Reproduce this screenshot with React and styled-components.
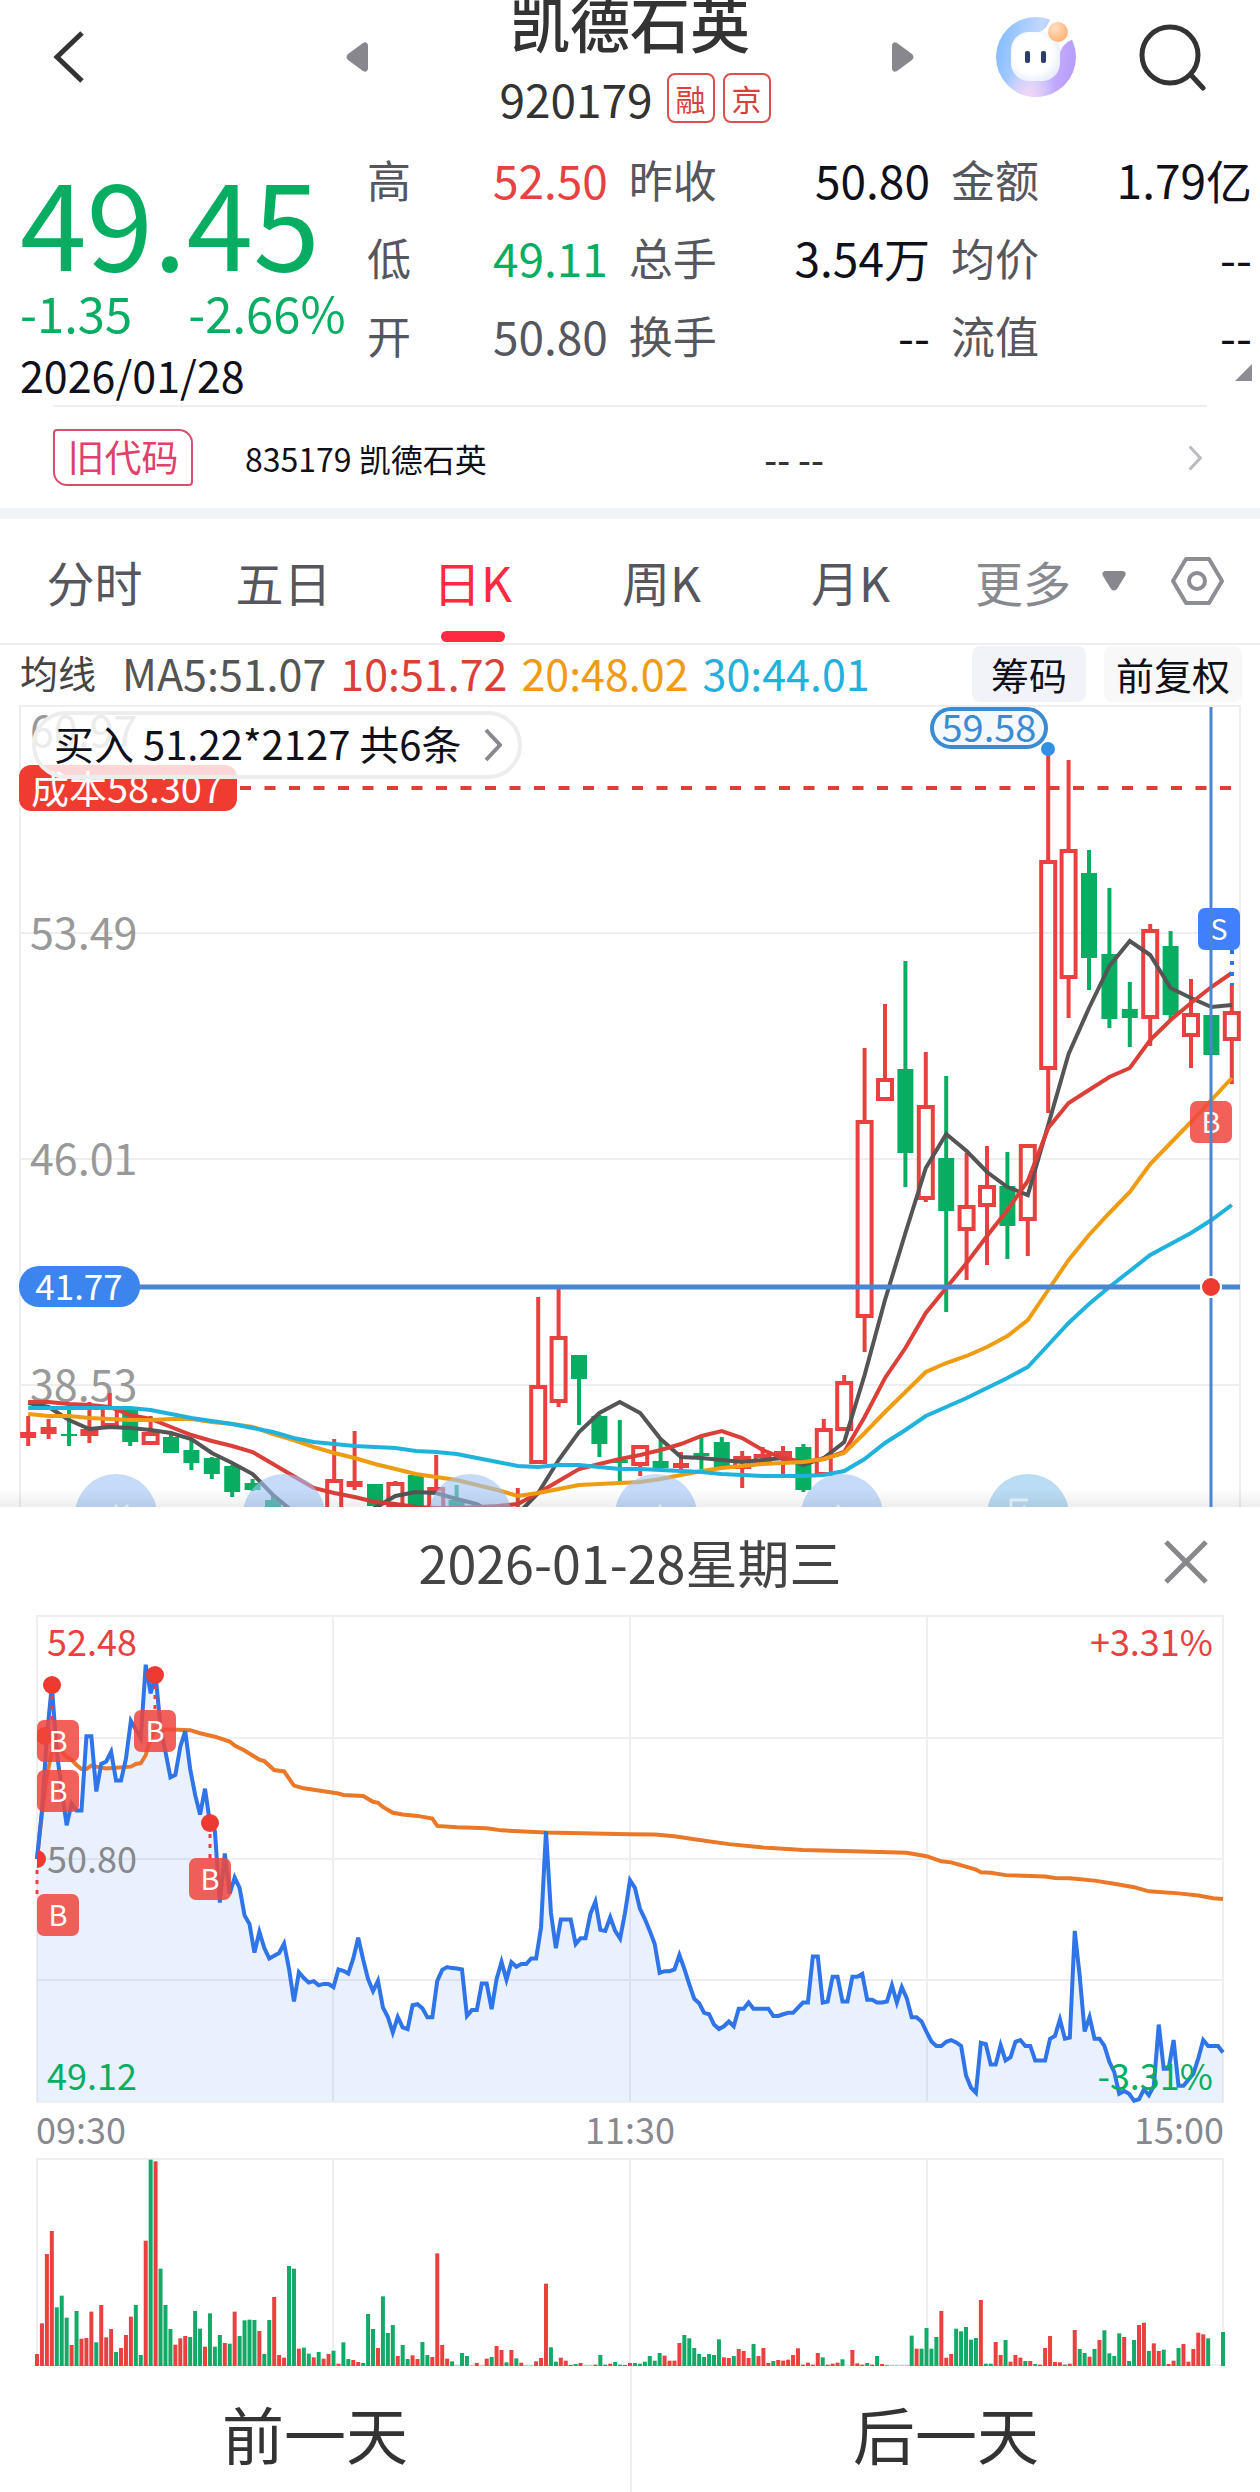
import React from 'react';
import styled, { createGlobalStyle, css } from 'styled-components';

const colors = {
    up: '#e8413f',
    down: '#07ae62',
    ink: '#10101a',
    text: '#333',
    label: '#56565e',
    muted: '#88888f',
    line: '#eeeeef',
    band: '#f2f3f8',
    accent: '#ff2942',
    blue: '#2f74e8',
    ma10: '#dc3f38',
    ma20: '#ef9c12',
    ma30: '#1fb2dd',
};

const GlobalStyle = createGlobalStyle`
    * {
        box-sizing: border-box;
    }

    body {
        margin: 0;
        background: #fff;
        color: ${colors.ink};
        font-family: 'Noto Sans CJK SC', 'Noto Sans', sans-serif;
    }

    button {
        margin: 0;
        padding: 0;
        border: 0;
        background: none;
        color: inherit;
        font: inherit;
        cursor: pointer;
    }
`;

const toneOf = tone => colors[tone] || colors.ink;

/* ---------- header ---------- */

const Header = styled.header`
    display: grid;
    grid-template-columns: 368px 1fr 368px;
    height: 140px;
`;

const HeaderSide = styled.div`
    display: flex;
    align-items: center;
    justify-content: space-between;
    height: 114px;
    padding: ${props => (props.$end ? '0 54px 0 0' : '0 0 0 53px')};
`;

const IconGroup = styled.div`
    display: flex;
    align-items: center;
    gap: 62px;
`;

const IconButton = styled.button`
    display: flex;

    svg {
        display: block;
    }
`;

const HeaderTitle = styled.div`
    display: flex;
    flex-direction: column;
    align-items: center;
    gap: 29px;
`;

const StockName = styled.h1`
    margin: 0;
    color: ${colors.text};
    font-size: 60px;
    font-weight: 500;
    line-height: 44px;
    white-space: nowrap;
`;

const CodeRow = styled.div`
    display: flex;
    align-items: center;
    gap: 8px;
    padding-left: 10px;
    color: ${colors.text};
    font-size: 46px;
    line-height: 50px;
`;

const CodeText = styled.span`
    margin-right: 6px;
`;

const Badge = styled.span`
    width: 48px;
    height: 50px;
    border: 2px solid #d9504d;
    border-radius: 8px;
    color: #d9403d;
    font-size: 30px;
    line-height: 46px;
    text-align: center;
`;

/* ---------- quote ---------- */

const Quote = styled.section`
    position: relative;
    display: grid;
    grid-template-columns: 347px 1fr;
    height: 265px;
    padding: 0 8px 0 20px;
`;

const PriceBlock = styled.div`
    padding-top: 18px;
    color: ${colors.down};
`;

const Price = styled.div`
    font-size: 120px;
    font-weight: 400;
    line-height: 122px;
`;

const Change = styled.div`
    display: flex;
    gap: 56px;
    font-size: 49px;
    line-height: 64px;
    white-space: nowrap;
`;

const QuoteDate = styled.time`
    display: block;
    color: ${colors.ink};
    font-size: 43px;
    line-height: 60px;
`;

const Stats = styled.dl`
    display: grid;
    grid-template-columns: 4fr 5fr 5fr;
    column-gap: 21px;
    align-content: start;
    margin: 0;
`;

const Stat = styled.div`
    display: flex;
    justify-content: space-between;
    line-height: 78px;
    white-space: nowrap;

    dt {
        color: ${colors.label};
        font-size: 44px;
    }

    dd {
        margin: 0;
        color: ${props => toneOf(props.$tone)};
        font-size: 46px;
    }
`;

const Corner = styled.svg`
    position: absolute;
    right: 8px;
    bottom: 24px;
`;

const OldCode = styled.a`
    display: flex;
    align-items: center;
    height: 103px;
    margin: 0 53px;
    border-top: 2px solid ${colors.line};
    color: ${colors.ink};
    font-size: 32px;
    line-height: 56px;
    text-decoration: none;

    svg {
        margin: 0 5px 0 auto;
    }
`;

const OldTag = styled.span`
    width: 140px;
    height: 57px;
    margin-right: 52px;
    border: 2px solid #d94f6d;
    border-radius: 4px 14px 4px 14px;
    color: #e0406a;
    font-size: 37px;
    line-height: 50px;
    text-align: center;
`;

const OldName = styled.span`
    flex: 0 0 45%;
`;

const Dashes = styled.span`
    color: ${colors.text};
    font-size: 36px;
    font-weight: 500;
`;

/* ---------- tabs ---------- */

const Tabs = styled.nav`
    display: grid;
    grid-template-columns: 3fr 1fr;
    height: 137px;
    border-top: 11px solid ${colors.band};
    border-bottom: 2px solid ${colors.line};
`;

const TabList = styled.div`
    display: grid;
    grid-template-columns: repeat(5, 1fr);
`;

const Tab = styled.button`
    position: relative;
    color: ${colors.label};
    font-size: 48px;
    line-height: 122px;

    ${props =>
        props.$active &&
        css`
            color: ${colors.accent};

            &::after {
                content: '';
                position: absolute;
                bottom: 1px;
                left: calc(50% - 32px);
                width: 64px;
                height: 11px;
                border-radius: 6px;
                background: ${colors.accent};
            }
        `}
`;

const TabTools = styled.div`
    display: flex;
    align-items: center;
    justify-content: space-between;
    padding: 0 36px 0 30px;
`;

const MoreButton = styled.button`
    display: flex;
    align-items: center;
    gap: 30px;
    color: ${colors.muted};
    font-size: 48px;
    line-height: 122px;
`;

const Averages = styled.div`
    display: flex;
    align-items: flex-start;
    gap: 14px;
    height: 58px;
    padding: 1px 18px 0 20px;
    font-size: 43px;
    line-height: 52px;
    white-space: nowrap;
`;

const AverageName = styled.span`
    margin-right: 12px;
    color: #444;
    font-size: 38px;
`;

const Average = styled.span`
    color: ${props => props.$color};
`;

const ChipGroup = styled.div`
    display: flex;
    gap: 18px;
    margin-left: auto;
`;

const Chip = styled.button`
    height: 56px;
    padding: 0 ${props => (props.$strong ? 19 : 12)}px;
    border-radius: 8px;
    background: ${props => (props.$strong ? colors.band : '#f8f8f9')};
    font-size: 38px;
    line-height: 50px;
`;

/* ---------- daily chart ---------- */

const ChartArea = styled.section`
    position: relative;
`;

const Chart = styled.svg`
    display: block;
    width: 100%;
    height: auto;
`;

const TradeButton = styled.button`
    position: absolute;
    top: 8px;
    left: 32px;
    display: flex;
    align-items: center;
    gap: 22px;
    height: 68px;
    padding: 0 16px 0 18px;
    border: 4px solid #ededee;
    border-radius: 34px;
    background: rgba(255, 255, 255, 0.8);
    color: ${colors.ink};
    font-size: 40px;
    line-height: 56px;
    white-space: nowrap;

    span {
        padding-bottom: 4px;
    }
`;

const STEP = 20.4;
const dayX = i => 28.2 + STEP * i;

// index, kind (r hollow, R solid red, g green), high, body top, body bottom, low
const candles = [
    [0, 'R', 1416, 1432, 1438, 1446],
    [1, 'R', 1419, 1427, 1434, 1439],
    [2, 'g', 1403, 1434, 1436, 1446],
    [3, 'r', 1402, 1430, 1435, 1443],
    [4, 'r', 1393, 1407, 1426, 1426],
    [5, 'g', 1408, 1408, 1442, 1446],
    [6, 'r', 1416, 1433, 1444, 1444],
    [7, 'g', 1433, 1437, 1453, 1453],
    [8, 'g', 1440, 1450, 1463, 1470],
    [9, 'g', 1457, 1458, 1474, 1479],
    [10, 'g', 1465, 1466, 1492, 1497],
    [11, 'g', 1479, 1483, 1490, 1491],
    [12, 'g', 1496, 1500, 1514, 1514],
    [15, 'r', 1439, 1480, 1514, 1514],
    [16, 'R', 1431, 1481, 1487, 1490],
    [17, 'g', 1484, 1484, 1506, 1514],
    [18, 'r', 1481, 1483, 1506, 1506],
    [19, 'g', 1475, 1475, 1514, 1514],
    [20, 'r', 1455, 1488, 1514, 1514],
    [21, 'g', 1485, 1500, 1507, 1507],
    [24, 'r', 1488, 1512, 1514, 1514],
    [25, 'r', 1297, 1386, 1463, 1463],
    [26, 'r', 1289, 1337, 1402, 1407],
    [27, 'g', 1355, 1355, 1379, 1425],
    [28, 'g', 1415, 1416, 1444, 1457],
    [29, 'g', 1420, 1460, 1463, 1481],
    [30, 'r', 1445, 1446, 1465, 1476],
    [31, 'g', 1440, 1461, 1468, 1470],
    [32, 'R', 1452, 1463, 1468, 1472],
    [33, 'g', 1437, 1453, 1456, 1472],
    [34, 'g', 1437, 1442, 1468, 1470],
    [35, 'r', 1451, 1457, 1468, 1488],
    [36, 'r', 1447, 1455, 1463, 1463],
    [37, 'r', 1446, 1452, 1458, 1474],
    [38, 'g', 1444, 1447, 1490, 1492],
    [39, 'r', 1419, 1429, 1475, 1476],
    [40, 'r', 1375, 1382, 1430, 1431],
    [41, 'r', 1048, 1121, 1317, 1352],
    [42, 'r', 1004, 1079, 1100, 1100],
    [43, 'g', 961, 1069, 1153, 1187],
    [44, 'r', 1052, 1106, 1199, 1202],
    [45, 'g', 1076, 1158, 1211, 1312],
    [46, 'r', 1153, 1206, 1230, 1280],
    [47, 'r', 1146, 1186, 1206, 1265],
    [48, 'g', 1152, 1186, 1226, 1259],
    [49, 'r', 1145, 1145, 1220, 1256],
    [50, 'r', 755, 861, 1069, 1113],
    [51, 'r', 760, 850, 978, 1018],
    [52, 'g', 850, 873, 958, 990],
    [53, 'g', 888, 954, 1019, 1028],
    [54, 'g', 982, 1009, 1018, 1047],
    [55, 'r', 924, 930, 1018, 1046],
    [56, 'g', 931, 946, 1015, 1020],
    [57, 'r', 979, 1014, 1036, 1068],
    [58, 'g', 1015, 1015, 1055, 1055],
    [59, 'r', 985, 1012, 1040, 1084],
];

const averages = [
    {
        color: '#555',
        values: [
            1403, 1407, 1420, 1429, 1427, 1428, 1430, 1433, 1439, 1453, 1463, 1474, 1495, 1512, 1524,
            1524, 1518, 1508, 1496, 1492, 1493, 1499, 1504, 1516, 1514, 1493, 1460, 1432, 1413, 1402,
            1413, 1439, 1457, 1458, 1460, 1462, 1460, 1458, 1465, 1458, 1442, 1375, 1300, 1233, 1168,
            1134, 1151, 1172, 1187, 1195, 1125, 1054, 1008, 966, 941, 955, 988, 998, 1007, 1005,
        ],
    },
    {
        color: colors.ma10,
        values: [
            1402, 1402, 1404, 1405, 1407, 1415, 1419, 1427, 1435, 1441, 1446, 1452, 1464, 1476, 1488,
            1493, 1497, 1502, 1504, 1507, 1508, 1508, 1507, 1506, 1504, 1493, 1481, 1469, 1464, 1459,
            1455, 1450, 1444, 1436, 1431, 1438, 1450, 1458, 1462, 1459, 1452, 1417, 1378, 1348, 1313,
            1288, 1263, 1236, 1210, 1181, 1128, 1103, 1090, 1077, 1068, 1040, 1020, 1003, 987, 973,
        ],
    },
    {
        color: colors.ma20,
        values: [
            1414, 1416, 1416, 1418, 1419, 1420, 1420, 1419, 1419, 1422, 1424, 1427, 1434, 1440, 1447,
            1453, 1458, 1464, 1469, 1474, 1477, 1480, 1485, 1490, 1496, 1493, 1489, 1485, 1484, 1483,
            1482, 1479, 1475, 1471, 1468, 1466, 1464, 1463, 1462, 1459, 1453, 1433, 1412, 1392, 1372,
            1363, 1356, 1347, 1336, 1320, 1290, 1260, 1235, 1213, 1192, 1164, 1143, 1122, 1100, 1078,
        ],
    },
    {
        color: colors.ma30,
        values: [
            1408, 1408, 1408, 1408, 1408, 1408, 1410, 1414, 1418, 1421, 1424, 1428, 1432, 1438, 1442,
            1444, 1446, 1447, 1448, 1451, 1452, 1454, 1458, 1462, 1466, 1467, 1465, 1465, 1467, 1469,
            1469, 1470, 1471, 1472, 1474, 1475, 1476, 1476, 1476, 1475, 1471, 1459, 1443, 1430, 1416,
            1407, 1398, 1388, 1378, 1367, 1345, 1323, 1304, 1287, 1271, 1255, 1244, 1233, 1220, 1205,
        ],
    },
];

const Candle = ({ row }) => {
    const [index, kind, high, top, bottom, low] = row;
    const x = dayX(index);
    const color = kind === 'g' ? colors.down : colors.up;
    const hollow = kind === 'r';
    return (
        <g stroke={color}>
            <path d={`M${x} ${high}V${top}M${x} ${bottom}V${low}`} strokeWidth="4" />
            {hollow ? (
                <rect
                    x={x - 7}
                    y={top + 1}
                    width="14"
                    height={Math.max(bottom - top - 2, 2)}
                    fill="none"
                    strokeWidth="4"
                />
            ) : (
                <rect x={x - 8} y={top} width="16" height={bottom - top} fill={color} stroke="none" />
            )}
        </g>
    );
};

const Mark = ({ x, y, letter = 'B', color = '#f0463e' }) => (
    <g>
        <rect
            x={x}
            y={y}
            width="42"
            height="42"
            rx="7"
            fill={color}
            fillOpacity={letter === 'B' ? 0.86 : 1}
        />
        <text x={x + 21} y={y + 32} fill="#fff" fontSize="29" textAnchor="middle">
            {letter}
        </text>
    </g>
);

const DayChart = () => (
    <Chart viewBox="0 703 1260 804" role="img" aria-label="日K">
        <defs>
            <linearGradient id="shade" x1="0" y1="0" x2="0" y2="1">
                <stop offset="0" stopColor="#000" stopOpacity="0" />
                <stop offset="1" stopColor="#000" stopOpacity="0.07" />
            </linearGradient>
        </defs>
        <path
            d="M20 1510V706H1240V1510M20 933H1240M20 1159H1240M20 1385H1240"
            fill="none"
            stroke={colors.line}
            strokeWidth="2"
        />
        <g fill="#999" fontSize="43">
            <text x="30" y="747">60.97</text>
            <text x="30" y="949">53.49</text>
            <text x="30" y="1175">46.01</text>
            <text x="30" y="1401">38.53</text>
        </g>
        {candles.map(row => (
            <Candle key={row[0]} row={row} />
        ))}
        <path d="M240 788H1232" stroke={colors.ma10} strokeWidth="4" strokeDasharray="11 13.5" />
        {averages.map(line => (
            <polyline
                key={line.color}
                points={line.values.map((y, i) => `${dayX(i)},${y}`).join(' ')}
                fill="none"
                stroke={line.color}
                strokeWidth="4"
            />
        ))}
        <rect x="19" y="765" width="218" height="46" rx="12" fill="#f03b31" />
        <text x="31" y="803" fill="#fff" fontSize="38">成本58.307</text>
        <rect x="932" y="709" width="114" height="38" rx="19" fill="#f4f9fe" stroke="#3a8bd2" strokeWidth="4" />
        <text x="989" y="742" fill="#3a8bd2" fontSize="38" textAnchor="middle">59.58</text>
        <circle cx="1048" cy="749" r="7" fill="#2f90e6" />
        <path d="M1232 950V985" stroke={colors.blue} strokeWidth="4" strokeDasharray="4 7" />
        <Mark x={1198} y={908} letter="S" color="#4080ff" />
        <Mark x={1190} y={1101} />
        <g fill="#9fc3f5" fillOpacity="0.6">
            {[116, 284, 470, 656, 842].map(cx => (
                <circle key={cx} cx={cx} cy="1515" r="41" />
            ))}
            <circle cx="1028" cy="1515" r="41" fill="#8cc5ee" />
        </g>
        <g fill="none" stroke="#fff" strokeOpacity="0.7" strokeWidth="3">
            <path d="M117 1505L107 1516M128 1505L118 1516M661 1505L653 1514M837 1505L845 1514M1011 1516V1500H1028M1023 1506L1031 1514" />
        </g>
        <rect x="0" y="1489" width="1260" height="18" fill="url(#shade)" />
        <g stroke="#4a86d0">
            <path d="M20 1287H1240" strokeWidth="5" />
            <path d="M1211 707V1507" strokeWidth="3" />
        </g>
        <circle cx="1211" cy="1287" r="10" fill="#ee3a30" stroke="#fff" strokeWidth="2" />
        <rect x="19" y="1266" width="121" height="41" rx="20" fill="#3c85ee" />
        <text x="79" y="1300" fill="#fff" fontSize="35" textAnchor="middle">41.77</text>
    </Chart>
);

/* ---------- intraday sheet ---------- */

const SheetHeader = styled.header`
    display: grid;
    grid-template-columns: 1fr auto 1fr;
    align-items: center;
    height: 105px;
    padding: 4px 52px 0;
    color: #444;

    button {
        justify-self: end;
    }
`;

const SheetTitle = styled.h2`
    grid-column: 2;
    margin: 0;
    font-size: 52px;
    font-weight: 400;
    line-height: 100px;
`;

const TimeAxis = styled.div`
    display: grid;
    grid-template-columns: 1fr auto 1fr;
    height: 50px;
    padding: 0 36px;
    color: ${colors.muted};
    font-size: 36px;
    line-height: 44px;

    span:last-child {
        text-align: right;
    }
`;

const Footer = styled.footer`
    display: grid;
    grid-template-columns: 1fr 1fr;
`;

const DayButton = styled.button`
    height: 126px;
    padding-top: 8px;
    color: ${colors.text};
    font-size: 62px;
    line-height: 118px;

    & + & {
        border-left: 2px solid ${colors.line};
    }
`;

const LEFT = 37;
const MINUTE = 1186 / 240;
const minuteX = m => LEFT + MINUTE * m;
const priceY = v => 1590 + v / 2.904;

// one value a minute, measured down from the top of the scale
const prices = [
    781, 640, 425, 277, 470, 580, 683, 620, 640, 640, 425, 425, 585, 505, 498, 470, 553, 553, 490, 380,
    405, 430, 217, 300, 247, 400, 470, 544, 537, 455, 410, 520, 595, 652, 577, 677, 700, 908, 765, 882,
    835, 865, 945, 970, 1053, 993, 1040, 1070, 1062, 1054, 1027, 1100, 1195, 1110, 1127, 1140, 1136, 1148, 1144, 1144,
    1153, 1102, 1106, 1114, 1070, 1010, 1073, 1130, 1165, 1135, 1212, 1240, 1285, 1240, 1270, 1275, 1206, 1203, 1215, 1241,
    1241, 1135, 1103, 1095, 1098, 1099, 1102, 1237, 1220, 1220, 1143, 1143, 1217, 1130, 1080, 1132, 1081, 1094, 1086, 1086,
    1070, 1070, 980, 700, 937, 1040, 957, 957, 957, 1028, 1011, 1011, 940, 905, 987, 990, 950, 990, 1012, 937,
    843, 865, 925, 955, 990, 1028, 1112, 1107, 1107, 1102, 1060, 1100, 1145, 1187, 1200, 1228, 1232, 1262, 1275, 1267,
    1253, 1267, 1216, 1216, 1198, 1216, 1216, 1216, 1216, 1237, 1237, 1232, 1228, 1228, 1213, 1198, 1198, 1064, 1064, 1198,
    1195, 1123, 1123, 1195, 1195, 1123, 1123, 1115, 1190, 1190, 1198, 1198, 1195, 1148, 1198, 1153, 1185, 1241, 1241, 1253,
    1283, 1311, 1324, 1324, 1312, 1307, 1314, 1324, 1410, 1445, 1460, 1315, 1319, 1378, 1378, 1322, 1366, 1357, 1312, 1307,
    1324, 1324, 1366, 1366, 1366, 1303, 1295, 1247, 1303, 1300, 990, 1120, 1282, 1240, 1303, 1303, 1324, 1370, 1400, 1463,
    1455, 1463, 1483, 1479, 1450, 1467, 1440, 1262, 1390, 1390, 1307, 1440, 1440, 1422, 1405, 1360, 1307, 1324, 1324, 1324,
    1343,
];

// minute, value
const meanPrice = [
    [0, 781], [1, 650], [2, 540], [3, 470], [4, 455], [6, 485], [7, 493], [8, 508], [9, 520], [10, 520],
    [11, 510], [12, 513], [14, 518], [16, 516], [19, 513], [20, 505], [21, 503], [22, 480], [23, 430], [24, 405],
    [27, 405], [31, 407], [33, 416], [36, 426], [39, 440], [40, 452], [42, 466], [45, 493], [46, 497], [48, 523],
    [50, 527], [52, 568], [54, 576], [61, 591], [62, 595], [66, 598], [68, 615], [69, 618], [70, 630], [72, 647],
    [74, 652], [77, 656], [80, 664], [81, 685], [85, 689], [91, 692], [94, 698], [103, 704], [120, 709], [125, 710],
    [129, 715], [133, 724], [140, 738], [147, 748], [155, 755], [165, 759], [176, 763], [180, 773], [183, 788], [185, 791],
    [190, 812], [191, 820], [193, 821], [196, 828], [204, 832], [206, 836], [209, 837], [214, 844], [218, 853], [222, 863],
    [225, 875], [231, 881], [235, 887], [238, 895], [240, 897],
];

// direction and height for each minute, in thirds of a unit
const volumes = `
r36 r128 r336 r405 g176 g211 g145 r63 g165 r82 r84 r163 g71 r183 r86 r111 g42 r54 r93 r148
g183 g33 r376 g619 r614 g292 g183 g111 r64 r83 r90 g87 g165 g112 r58 g158 g58 g93 r69 g67
r163 g90 g137 g139 g138 r105 g36 g138 r207 r33 r25 g300 g292 r52 g55 g37 r26 g42 r22 r36
g46 r7 g71 g21 r18 r12 g9 g156 g111 r54 g209 g99 g123 r30 g63 g21 r32 r21 g72 g33
r27 r338 r63 r22 g14 r1 g39 g30 r1 r9 r1 r22 g27 r60 r48 g11 r48 g23 r10 r1
r1 r14 r24 r247 g56 g13 r25 r16 r3 g6 r9 r1 r1 r4 g33 g4 r7 g12 g4 r3
r9 g9 g7 g13 g30 g16 g39 r31 r16 r16 r69 g93 g83 g54 g36 g27 g36 g33 g80 r26
r24 g30 r51 r45 r24 g66 r30 r54 r9 g15 r18 r16 r19 r33 r53 r4 r10 r4 r39 g26
r4 r7 r10 g20 r0 r48 r8 r4 g9 r4 g30 r6 r2 r1 r1 g1 g1 g91 r52 g52
g114 g52 g87 r165 r25 r36 g112 g104 g117 g79 g84 r198 g7 g7 r72 r33 g78 r13 r33 r25
g15 r15 g6 r4 r54 r90 r12 r11 g4 r7 r108 g51 g39 r28 g51 r78 g107 g38 g30 g98
r87 g15 g78 r123 r130 g45 r68 r45 g49 r6 r16 g54 r66 r13 r51 r100 r95 g83 r0 r0
g102`
    .trim()
    .split(/\s+/)
    .map(item => ({ up: item[0] === 'r', height: Number(item.slice(1)) / 3 }));

const pricePoints = prices.map((v, m) => `${minuteX(m)},${priceY(v)}`).join(' ');

const MinuteChart = () => (
    <Chart viewBox="0 1612 1260 494" role="img" aria-label="分时">
        <defs>
            <clipPath id="plot">
                <rect x="37" y="1612" width="1187" height="492" />
            </clipPath>
        </defs>
        <polygon points={`37,2101 ${pricePoints} 1223,2101`} fill="#e9f0fe" />
        <path
            d="M37 1616H1223V2102H37ZM37 1738H1223M37 1859H1223M37 1980H1223M333 1616V2102M630 1616V2102M927 1616V2102"
            fill="none"
            stroke="#182040"
            strokeOpacity="0.07"
            strokeWidth="2"
        />
        <polyline
            points={meanPrice.map(([m, v]) => `${minuteX(m)},${priceY(v)}`).join(' ')}
            fill="none"
            stroke="#ea7828"
            strokeWidth="4"
        />
        <polyline points={pricePoints} fill="none" stroke={colors.blue} strokeWidth="4" />
        <path
            d="M37 1870V1896M52 1696V1720M155 1685V1710M210 1834V1858"
            stroke="#e8413f"
            strokeWidth="3"
            strokeDasharray="4 6"
        />
        <g fill="#ee3a30" clipPath="url(#plot)">
            <circle cx="37" cy="1859" r="9" />
            <circle cx="45" cy="1736" r="9" />
            <circle cx="52" cy="1685" r="9" />
            <circle cx="155" cy="1675" r="9" />
            <circle cx="210" cy="1823" r="9" />
        </g>
        <Mark x={37} y={1720} />
        <Mark x={37} y={1770} />
        <Mark x={37} y={1894} />
        <Mark x={134} y={1710} />
        <Mark x={189} y={1858} />
        <g fontSize="36">
            <text x="47" y="1656" fill={colors.up}>52.48</text>
            <text x="47" y="1873" fill={colors.muted}>50.80</text>
            <text x="47" y="2090" fill={colors.down}>49.12</text>
            <text x="1213" y="1656" fill={colors.up} textAnchor="end">+3.31%</text>
            <text x="1213" y="2090" fill={colors.down} textAnchor="end">-3.31%</text>
        </g>
    </Chart>
);

const VolumeChart = () => (
    <Chart viewBox="0 2156 1260 210" role="img" aria-label="成交量">
        <path
            d="M37 2365V2159H1223V2365ZM333 2159V2365M630 2159V2365M927 2159V2365"
            fill="none"
            stroke={colors.line}
            strokeWidth="2"
        />
        {volumes.map((bar, m) => (
            <rect
                key={m}
                x={minuteX(m) - 2}
                y={2366 - bar.height}
                width="4"
                height={bar.height}
                fill={bar.up ? colors.up : '#12aa66'}
            />
        ))}
    </Chart>
);

/* ---------- icons ---------- */

const BackIcon = () => (
    <svg width="32" height="54" viewBox="0 0 32 54" fill="none" stroke="#333" strokeWidth="5">
        <path d="M29 3L4 27L29 51" />
    </svg>
);

const ArrowIcon = ({ left }) => (
    <svg width="22" height="32" viewBox="0 0 22 32" fill="#88878e">
        <path
            d={
                left
                    ? 'M22 4Q21 0 17 2L2 13Q-1 16 2 19L17 30Q21 32 22 28Z'
                    : 'M0 4Q1 0 5 2L20 13Q23 16 20 19L5 30Q1 32 0 28Z'
            }
        />
    </svg>
);

const MascotIcon = () => (
    <svg width="82" height="82" viewBox="0 0 82 82">
        <defs>
            <linearGradient id="ring" x1="0" y1="0.4" x2="1" y2="0.6">
                <stop offset="0" stopColor="#86bdff" />
                <stop offset="0.5" stopColor="#c3d8ff" />
                <stop offset="0.8" stopColor="#bfa8fd" />
                <stop offset="1" stopColor="#b79cfb" />
            </linearGradient>
            <radialGradient id="blush" cx="0.4" cy="0.98" r="0.35">
                <stop offset="0" stopColor="#f5d3f6" />
                <stop offset="1" stopColor="#f5d3f6" stopOpacity="0" />
            </radialGradient>
            <radialGradient id="face" cx="0.45" cy="0.45" r="0.65">
                <stop offset="0.6" stopColor="#fff" />
                <stop offset="1" stopColor="#e3e9fb" />
            </radialGradient>
            <radialGradient id="ball" cx="0.35" cy="0.3" r="0.8">
                <stop offset="0" stopColor="#ffdfc4" />
                <stop offset="1" stopColor="#ffae6c" />
            </radialGradient>
        </defs>
        <circle cx="41" cy="41" r="40" fill="url(#ring)" />
        <circle cx="41" cy="41" r="40" fill="url(#blush)" />
        <path d="M56 0Q53 14 42 17L64 40Q66 28 78 23L82 0Z" fill="#fff" />
        <rect x="16" y="16" width="49" height="49" rx="18" fill="url(#face)" />
        <circle cx="63" cy="16" r="10" fill="url(#ball)" />
        <rect x="30" y="35" width="5" height="12" rx="2" fill="#2b3d6b" />
        <rect x="46" y="35" width="5" height="12" rx="2" fill="#2b3d6b" />
    </svg>
);

const SearchIcon = () => (
    <svg width="67" height="67" viewBox="0 0 67 67" fill="none" stroke="#333" strokeWidth="5" strokeLinecap="round">
        <circle cx="31" cy="31" r="28" />
        <path d="M52 51L64 64" />
    </svg>
);

const ChevronIcon = ({ width, height, color, stroke }) => (
    <svg width={width} height={height} viewBox="0 0 18 34" fill="none" stroke={color} strokeWidth={stroke}>
        <path d="M2 2L16 17L2 32" />
    </svg>
);

const MoreIcon = () => (
    <svg width="26" height="22" viewBox="0 0 26 22" fill="#88878e">
        <path d="M4 1H22Q26 2 24 6L16 19Q13 22 10 19L2 6Q0 2 4 1Z" />
    </svg>
);

const SettingsIcon = () => (
    <svg width="53" height="48" viewBox="0 0 53 48" fill="none" stroke="#8d8d94" strokeWidth="4">
        <path d="M15 2H38L51 24L38 46H15L2 24Z" strokeLinejoin="round" />
        <circle cx="26" cy="24" r="8" />
    </svg>
);

const CloseIcon = () => (
    <svg width="44" height="44" viewBox="0 0 44 44" fill="none" stroke="#88888c" strokeWidth="5">
        <path d="M2 2L42 42M42 2L2 42" />
    </svg>
);

/* ---------- page ---------- */

const stats = [
    ['高', '52.50', 'up'],
    ['昨收', '50.80'],
    ['金额', '1.79亿'],
    ['低', '49.11', 'down'],
    ['总手', '3.54万'],
    ['均价', '--'],
    ['开', '50.80', 'label'],
    ['换手', '--'],
    ['流值', '--'],
];

const tabs = ['分时', '五日', '日K', '周K', '月K'];

const App = () => (
    <>
        <GlobalStyle />
        <Header>
            <HeaderSide>
                <IconButton aria-label="返回">
                    <BackIcon />
                </IconButton>
                <IconButton aria-label="上一只">
                    <ArrowIcon left />
                </IconButton>
            </HeaderSide>
            <HeaderTitle>
                <StockName>凯德石英</StockName>
                <CodeRow>
                    <CodeText>920179</CodeText>
                    <Badge>融</Badge>
                    <Badge>京</Badge>
                </CodeRow>
            </HeaderTitle>
            <HeaderSide $end>
                <IconButton aria-label="下一只">
                    <ArrowIcon />
                </IconButton>
                <IconGroup>
                    <IconButton aria-label="助手">
                        <MascotIcon />
                    </IconButton>
                    <IconButton aria-label="搜索">
                        <SearchIcon />
                    </IconButton>
                </IconGroup>
            </HeaderSide>
        </Header>
        <Quote>
            <PriceBlock>
                <Price>49.45</Price>
                <Change>
                    <span>-1.35</span>
                    <span>-2.66%</span>
                </Change>
                <QuoteDate>2026/01/28</QuoteDate>
            </PriceBlock>
            <Stats>
                {stats.map(([label, value, tone]) => (
                    <Stat key={label} $tone={tone}>
                        <dt>{label}</dt>
                        <dd>{value}</dd>
                    </Stat>
                ))}
            </Stats>
            <Corner width="17" height="17" viewBox="0 0 17 17">
                <path d="M17 0V17H0Z" fill="#8d8d94" />
            </Corner>
        </Quote>
        <OldCode href="#old">
            <OldTag>旧代码</OldTag>
            <OldName>835179 凯德石英</OldName>
            <Dashes>-- --</Dashes>
            <ChevronIcon width={14} height={26} color="#bcbcc0" stroke={4} />
        </OldCode>
        <Tabs>
            <TabList>
                {tabs.map(name => (
                    <Tab key={name} $active={name === '日K'}>
                        {name}
                    </Tab>
                ))}
            </TabList>
            <TabTools>
                <MoreButton>
                    更多
                    <MoreIcon />
                </MoreButton>
                <IconButton aria-label="设置">
                    <SettingsIcon />
                </IconButton>
            </TabTools>
        </Tabs>
        <Averages>
            <AverageName>均线</AverageName>
            <Average $color="#555">MA5:51.07</Average>
            <Average $color={colors.ma10}>10:51.72</Average>
            <Average $color={colors.ma20}>20:48.02</Average>
            <Average $color={colors.ma30}>30:44.01</Average>
            <ChipGroup>
                <Chip $strong>筹码</Chip>
                <Chip>前复权</Chip>
            </ChipGroup>
        </Averages>
        <ChartArea>
            <DayChart />
            <TradeButton>
                <span>买入 51.22*2127 共6条</span>
                <ChevronIcon width={18} height={34} color="#88888f" stroke={4} />
            </TradeButton>
        </ChartArea>
        <section>
            <SheetHeader>
                <SheetTitle>2026-01-28星期三</SheetTitle>
                <IconButton aria-label="关闭">
                    <CloseIcon />
                </IconButton>
            </SheetHeader>
            <MinuteChart />
            <TimeAxis>
                <span>09:30</span>
                <span>11:30</span>
                <span>15:00</span>
            </TimeAxis>
            <VolumeChart />
            <Footer>
                <DayButton>前一天</DayButton>
                <DayButton>后一天</DayButton>
            </Footer>
        </section>
    </>
);

export default App;
